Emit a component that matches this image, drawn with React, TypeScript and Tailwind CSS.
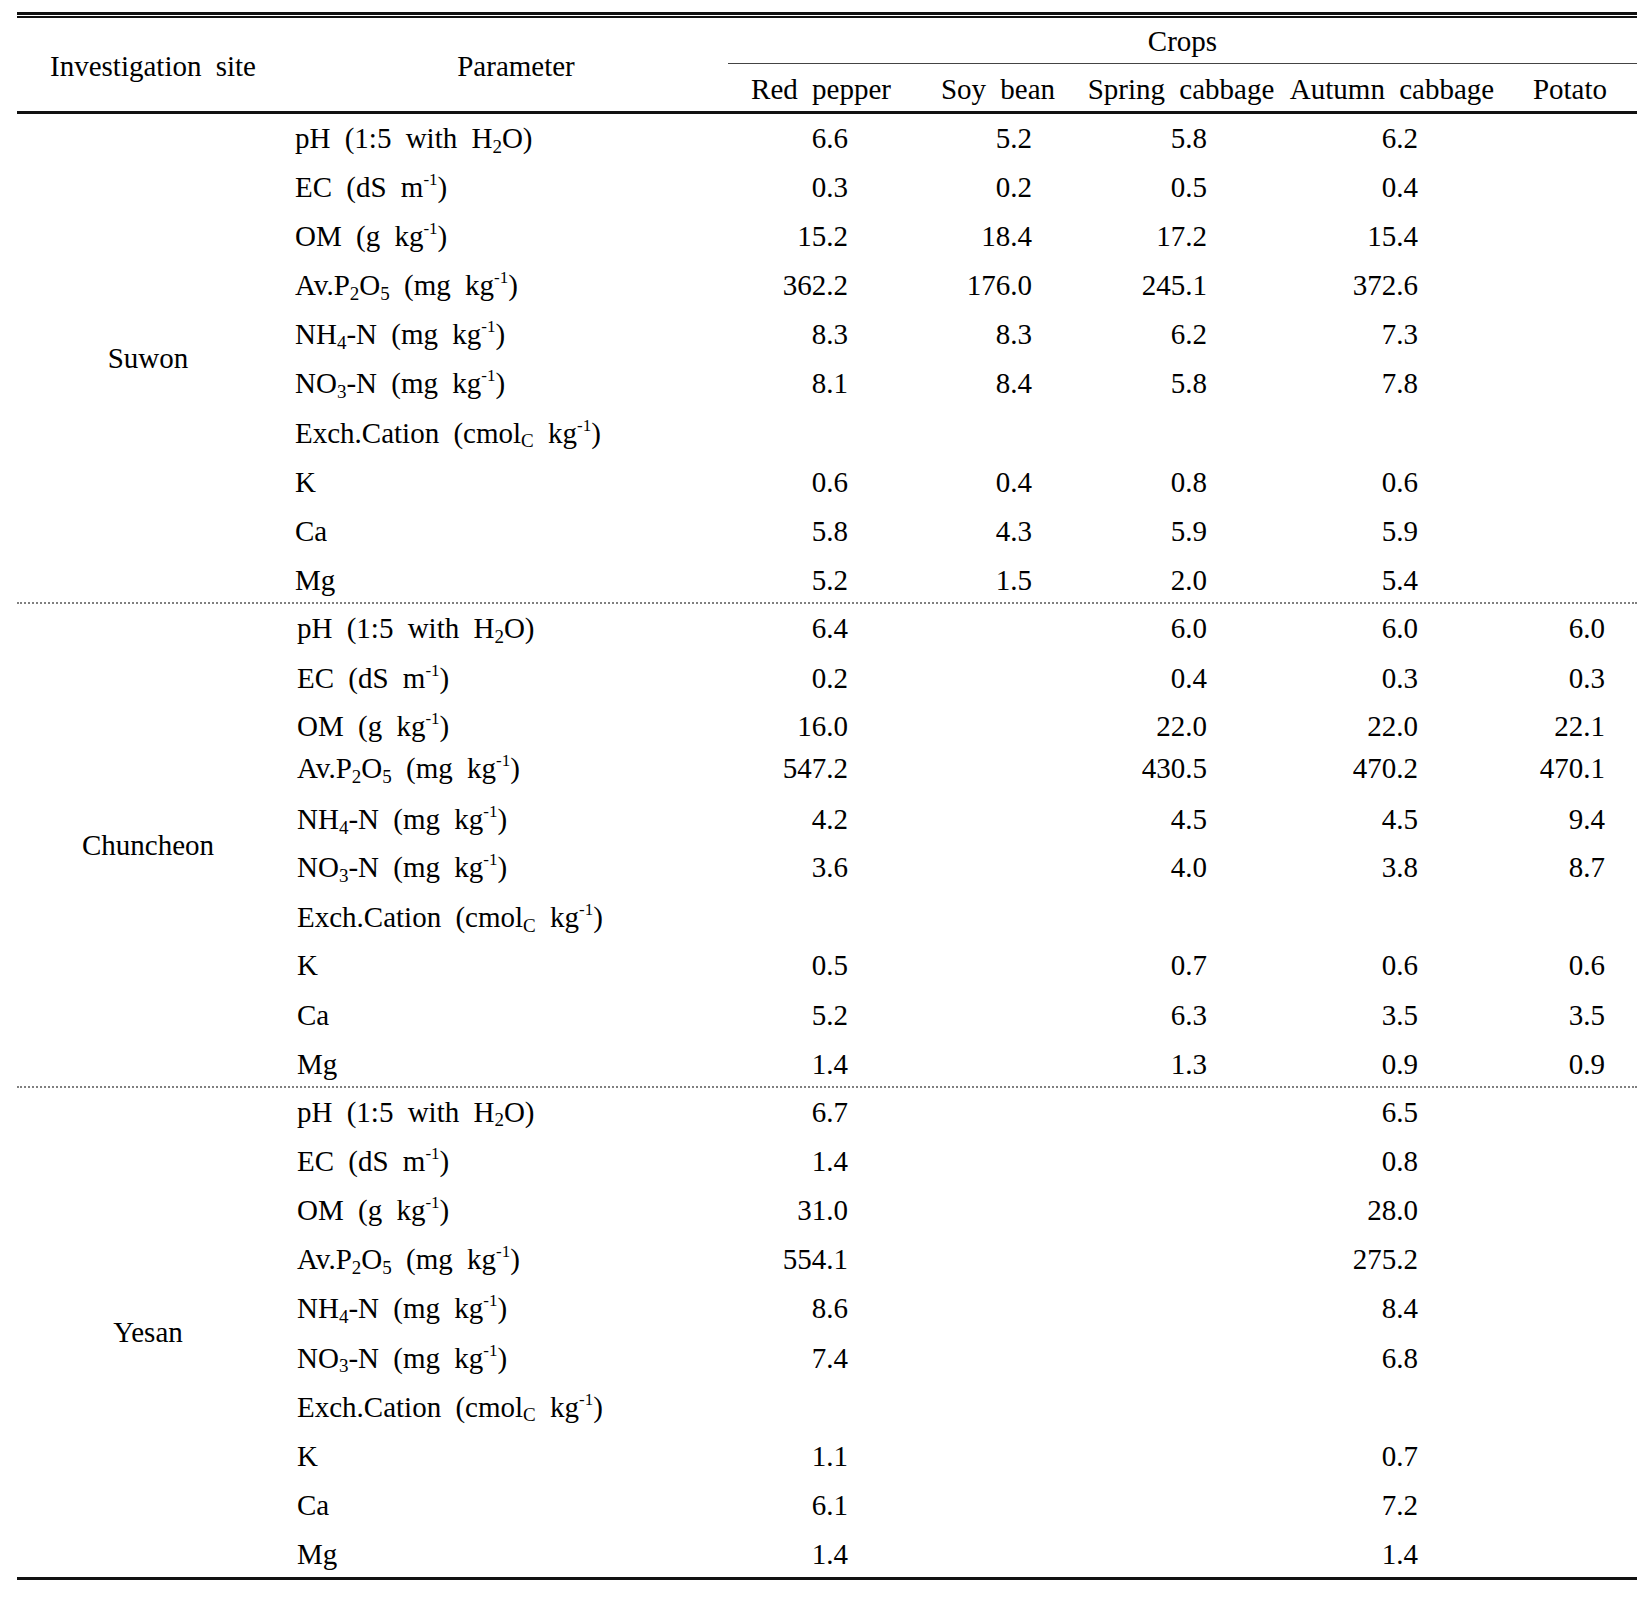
import React from 'react'

type Row = {
  key: string
  values: string[]
  h: string
}

const Sub = ({ children }: { children: React.ReactNode }) => (
  <sub className="text-[19px]">{children}</sub>
)

const Sup = ({ children }: { children: React.ReactNode }) => (
  <sup className="text-[17px] top-[-12px]">{children}</sup>
)

const paramLabel = (key: string) => {
  switch (key) {
    case 'pH':
      return <>pH (1:5 with H<Sub>2</Sub>O)</>
    case 'EC':
      return <>EC (dS m<Sup>-1</Sup>)</>
    case 'OM':
      return <>OM (g kg<Sup>-1</Sup>)</>
    case 'Av':
      return <>Av.P<Sub>2</Sub>O<Sub>5</Sub> (mg kg<Sup>-1</Sup>)</>
    case 'NH4':
      return <>NH<Sub>4</Sub>-N (mg kg<Sup>-1</Sup>)</>
    case 'NO3':
      return <>NO<Sub>3</Sub>-N (mg kg<Sup>-1</Sup>)</>
    case 'Exch':
      return <>Exch.Cation (cmol<Sub>C</Sub> kg<Sup>-1</Sup>)</>
    default:
      return <>{key}</>
  }
}

const H = 'h-[49.2px]'

const suwon: Row[] = [
  { key: 'pH', values: ['6.6', '5.2', '5.8', '6.2', ''], h: 'h-[49.1px]' },
  { key: 'EC', values: ['0.3', '0.2', '0.5', '0.4', ''], h: 'h-[49.1px]' },
  { key: 'OM', values: ['15.2', '18.4', '17.2', '15.4', ''], h: 'h-[49.1px]' },
  { key: 'Av', values: ['362.2', '176.0', '245.1', '372.6', ''], h: 'h-[49.1px]' },
  { key: 'NH4', values: ['8.3', '8.3', '6.2', '7.3', ''], h: 'h-[49.1px]' },
  { key: 'NO3', values: ['8.1', '8.4', '5.8', '7.8', ''], h: 'h-[49.1px]' },
  { key: 'Exch', values: ['', '', '', '', ''], h: 'h-[49.1px]' },
  { key: 'K', values: ['0.6', '0.4', '0.8', '0.6', ''], h: 'h-[49.1px]' },
  { key: 'Ca', values: ['5.8', '4.3', '5.9', '5.9', ''], h: 'h-[49.1px]' },
  { key: 'Mg', values: ['5.2', '1.5', '2.0', '5.4', ''], h: 'h-[46.6px]' },
]

const chuncheon: Row[] = [
  { key: 'pH', values: ['6.4', '', '6.0', '6.0', '6.0'], h: 'h-[49.4px]' },
  { key: 'EC', values: ['0.2', '', '0.4', '0.3', '0.3'], h: 'h-[48.5px]' },
  { key: 'OM', values: ['16.0', '', '22.0', '22.0', '22.1'], h: 'h-[42.1px]' },
  { key: 'Av', values: ['547.2', '', '430.5', '470.2', '470.1'], h: 'h-[50.5px]' },
  { key: 'NH4', values: ['4.2', '', '4.5', '4.5', '9.4'], h: 'h-[48.5px]' },
  { key: 'NO3', values: ['3.6', '', '4.0', '3.8', '8.7'], h: 'h-[49.5px]' },
  { key: 'Exch', values: ['', '', '', '', ''], h: 'h-[48.4px]' },
  { key: 'K', values: ['0.5', '', '0.7', '0.6', '0.6'], h: 'h-[49.5px]' },
  { key: 'Ca', values: ['5.2', '', '6.3', '3.5', '3.5'], h: 'h-[49.5px]' },
  { key: 'Mg', values: ['1.4', '', '1.3', '0.9', '0.9'], h: 'h-[45.3px]' },
]

const yesan: Row[] = [
  { key: 'pH', values: ['6.7', '', '', '6.5', ''], h: H },
  { key: 'EC', values: ['1.4', '', '', '0.8', ''], h: H },
  { key: 'OM', values: ['31.0', '', '', '28.0', ''], h: H },
  { key: 'Av', values: ['554.1', '', '', '275.2', ''], h: H },
  { key: 'NH4', values: ['8.6', '', '', '8.4', ''], h: H },
  { key: 'NO3', values: ['7.4', '', '', '6.8', ''], h: H },
  { key: 'Exch', values: ['', '', '', '', ''], h: H },
  { key: 'K', values: ['1.1', '', '', '0.7', ''], h: H },
  { key: 'Ca', values: ['6.1', '', '', '7.2', ''], h: H },
  { key: 'Mg', values: ['1.4', '', '', '1.4', ''], h: 'h-[46.8px]' },
]

// right edge of every value column lines up with the numbers in the picture
const valueCols = ['w-[128px]', 'w-[184px]', 'w-[175px]', 'w-[211px]', 'w-[187px]']

function SiteBlock({ site, rows, paramPad }: { site: string; rows: Row[]; paramPad: string }) {
  return (
    <div className="flex">
      <div className="w-[262px] flex items-center justify-center">
        <span>{site}</span>
      </div>
      <div className="flex flex-col">
        {rows.map((row) => (
          <div key={row.key} className={`flex items-start pt-[7px] ${row.h}`}>
            <div className={`w-[441px] ${paramPad}`}>{paramLabel(row.key)}</div>
            {row.values.map((v, i) => (
              <div key={i} className={`${valueCols[i]} text-right`}>
                {v}
              </div>
            ))}
          </div>
        ))}
      </div>
    </div>
  )
}

export default function App() {
  const crops = [
    { name: 'Red pepper', w: 'w-[186px]' },
    { name: 'Soy bean', w: 'w-[168px]' },
    { name: 'Spring cabbage', w: 'w-[198px]' },
    { name: 'Autumn cabbage', w: 'w-[224px]' },
    { name: 'Potato', w: 'w-[132px]' },
  ]

  return (
    <div className="bg-white min-h-[1613px] pt-[12px] text-black font-['Liberation_Serif',serif] text-[29px] leading-[34px] [word-spacing:7px]">
      <div className="ml-[17px] w-[1620px]">
        {/* top double rule */}
        <div className="h-[3px] bg-[#111]" />
        <div className="mt-px h-[2px] bg-[#111]" />

        {/* header */}
        <div className="flex h-[93px]">
          <div className="w-[272px] flex items-center justify-center pt-[2px]">
            <span className="whitespace-nowrap">Investigation site</span>
          </div>
          <div className="w-[439px] pl-[15px] flex items-center justify-center pt-[2px]">
            <span>Parameter</span>
          </div>
          <div className="flex-1 flex flex-col">
            <div className="h-[45px] flex items-center justify-center">Crops</div>
            <div className="h-px bg-[#444]" />
            <div className="flex pt-[8px]">
              {crops.map((c) => (
                <div key={c.name} className={`${c.w} text-center whitespace-nowrap`}>
                  {c.name}
                </div>
              ))}
            </div>
          </div>
        </div>
        <div className="h-[3px] bg-[#111]" />

        <SiteBlock site="Suwon" rows={suwon} paramPad="pl-[16px]" />
        <div className="border-t-2 border-dotted border-[#808080]" />
        <SiteBlock site="Chuncheon" rows={chuncheon} paramPad="pl-[18px]" />
        <div className="border-t-2 border-dotted border-[#808080]" />
        <SiteBlock site="Yesan" rows={yesan} paramPad="pl-[18px]" />

        <div className="h-[3px] bg-[#111]" />
      </div>
    </div>
  )
}
